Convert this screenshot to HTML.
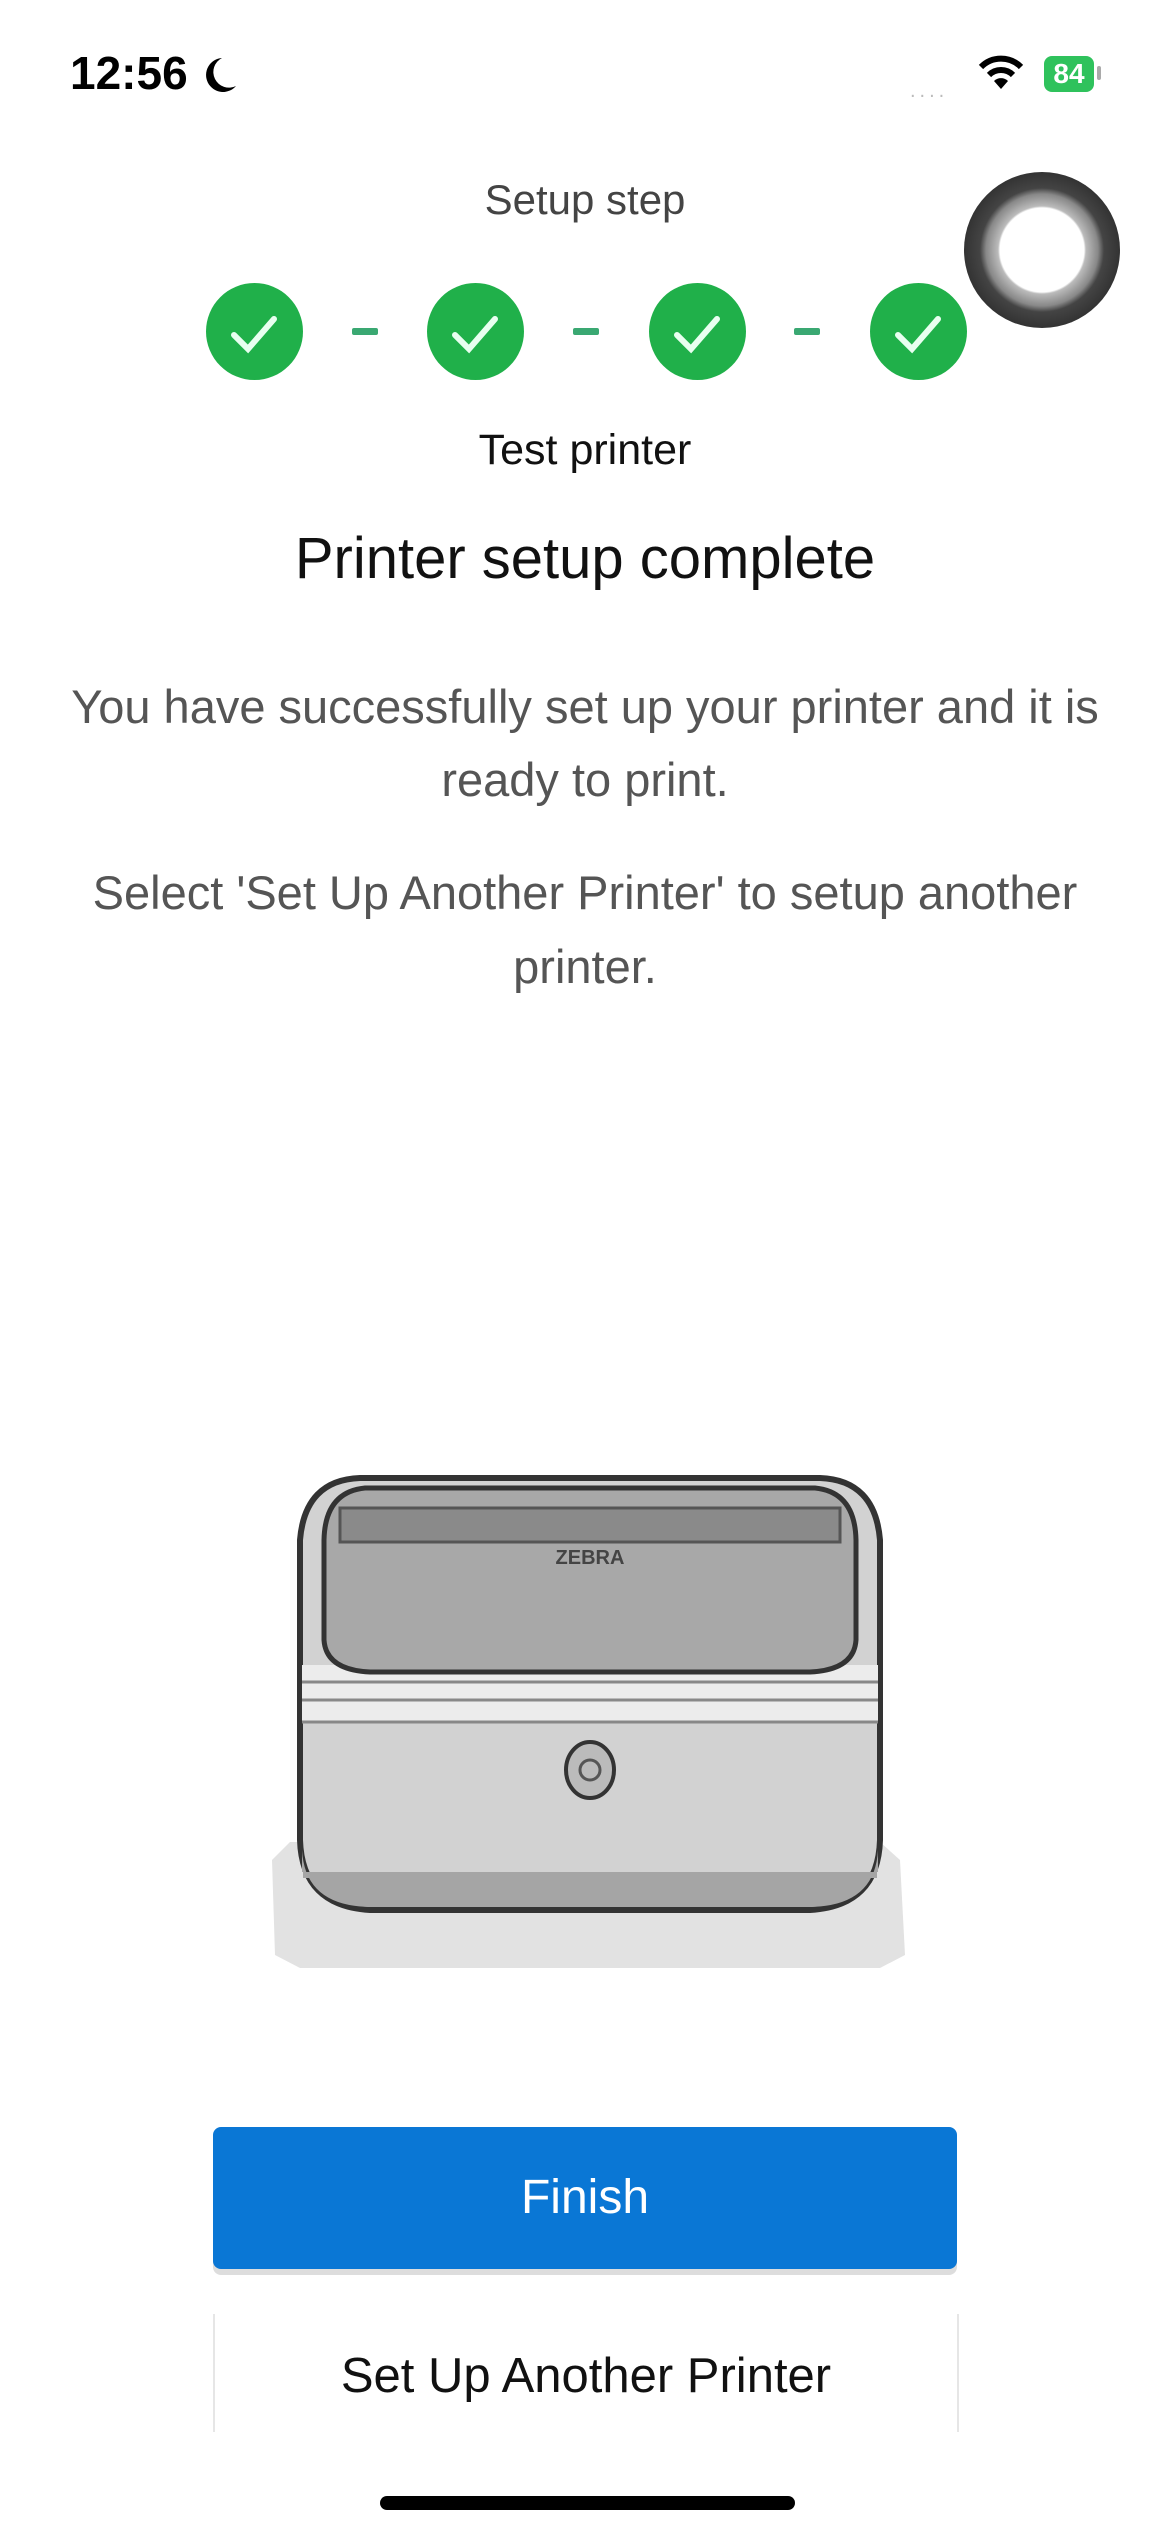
<!DOCTYPE html>
<html><head><meta charset="utf-8"><style>
html,body{margin:0;padding:0;background:#fff;}
body{width:1170px;height:2532px;position:relative;overflow:hidden;font-family:"Liberation Sans",sans-serif;}
.a{position:absolute;}
.c{position:absolute;left:0;width:1170px;text-align:center;}
.dot{position:absolute;width:97px;height:97px;border-radius:50%;background:#20b04a;top:283px;}
.dash{position:absolute;width:26px;height:7px;background:#3aa872;top:328px;border-radius:2px;}
</style></head><body>
<div class="a" style="left:70px;top:46px;font-size:46px;font-weight:bold;color:#000;">12:56</div>
<svg class="a" style="left:202px;top:56px" width="36" height="40" viewBox="0 0 36 40"><path d="M20 2 A17 17 0 1 0 34 30 A15 15 0 0 1 20 2Z" fill="#000"/></svg>
<div class="a" style="left:910px;top:80px;color:#bbb;font-size:20px;letter-spacing:4px">....</div>
<svg class="a" style="left:978px;top:55px" width="46" height="36" viewBox="0 0 46 36"><path d="M3 12 A28 28 0 0 1 43 12" stroke="#000" stroke-width="6" fill="none"/><path d="M11 20 A17 17 0 0 1 35 20" stroke="#000" stroke-width="6" fill="none"/><path d="M23 34 L16 26 A10 10 0 0 1 30 26Z" fill="#000"/></svg>
<div class="a" style="left:1044px;top:56px;width:50px;height:36px;background:#2fc25c;border-radius:8px;color:#fff;font-weight:bold;font-size:28px;line-height:36px;text-align:center">84</div>
<div class="a" style="left:1097px;top:66px;width:4px;height:14px;background:#aaa;border-radius:2px"></div>

<div class="c" style="top:176px;font-size:42px;color:#444">Setup step</div>
<div class="dot" style="left:206px"></div><div class="dot" style="left:427px"></div><div class="dot" style="left:649px"></div><div class="dot" style="left:870px"></div>
<svg class="a" style="left:0;top:283px" width="1170" height="97">
<g stroke="#e8fff0" stroke-width="6" fill="none" stroke-linecap="round">
<path d="M234 52 L248 66 L274 36"/><path d="M455 52 L469 66 L495 36"/><path d="M677 52 L691 66 L717 36"/><path d="M898 52 L912 66 L938 36"/></g></svg>
<div class="dash" style="left:352px"></div><div class="dash" style="left:573px"></div><div class="dash" style="left:794px"></div>
<div class="a" style="left:964px;top:172px;width:156px;height:156px;border-radius:50%;background:radial-gradient(circle,#fff 0 42px,#bbb 44px,#888 56px,#444 62px,#333 78px)"></div>

<div class="c" style="top:426px;font-size:43px;color:#111">Test printer</div>
<div class="c" style="top:525px;font-size:58px;color:#111">Printer setup complete</div>
<div class="c" style="top:670px;font-size:47px;color:#555;line-height:73px">You have successfully set up your printer and it is<br>ready to print.</div>
<div class="c" style="top:856px;font-size:47px;color:#555;line-height:74px">Select 'Set Up Another Printer' to setup another<br>printer.</div>

<svg class="a" style="left:260px;top:1460px" width="660" height="520" viewBox="0 0 660 520">
<path d="M12 400 L30 382 L620 382 L640 400 L645 495 L620 508 L40 508 L15 495Z" fill="#e2e2e2"/>
<path d="M100 18 Q45 20 40 80 L40 380 Q42 446 110 450 L550 450 Q618 446 620 380 L620 80 Q615 20 560 18Z" fill="#d2d2d2" stroke="#333" stroke-width="6"/>
<path d="M42 412 L618 412 L618 390 Q615 446 550 447 L110 447 Q45 446 42 390Z" fill="#a5a5a5"/>
<rect x="43" y="412" width="574" height="6" fill="#a5a5a5"/>
<path d="M42 205 L618 205 L618 262 L42 262Z" fill="#ececec"/>
<path d="M42 222 L618 222 M42 240 L618 240 M42 262 L618 262" stroke="#888" stroke-width="3"/>
<path d="M105 28 Q65 32 64 80 L64 180 Q66 210 110 212 L550 212 Q594 210 596 180 L596 80 Q595 32 555 28Z" fill="#a8a8a8" stroke="#333" stroke-width="5"/>
<rect x="80" y="48" width="500" height="34" fill="#8a8a8a" stroke="#555" stroke-width="3"/>
<text x="330" y="104" font-size="20" font-weight="bold" fill="#444" text-anchor="middle" font-family="Liberation Sans,sans-serif">ZEBRA</text>
<ellipse cx="330" cy="310" rx="24" ry="28" fill="#bbb" stroke="#333" stroke-width="4"/>
<circle cx="330" cy="310" r="10" fill="none" stroke="#555" stroke-width="3"/>
</svg>

<div class="a" style="left:213px;top:2127px;width:744px;height:142px;background:#0a77d5;border-radius:8px;box-shadow:0 6px 0 #ddd;color:#fff;font-size:48px;line-height:142px;text-align:center">Finish</div>
<div class="a" style="left:213px;top:2314px;width:742px;height:118px;border-left:2px solid #e6e6e6;border-right:2px solid #e6e6e6;color:#111;font-size:49px;line-height:124px;text-align:center">Set Up Another Printer</div>
<div class="a" style="left:380px;top:2496px;width:415px;height:14px;background:#000;border-radius:7px"></div>
</body></html>
